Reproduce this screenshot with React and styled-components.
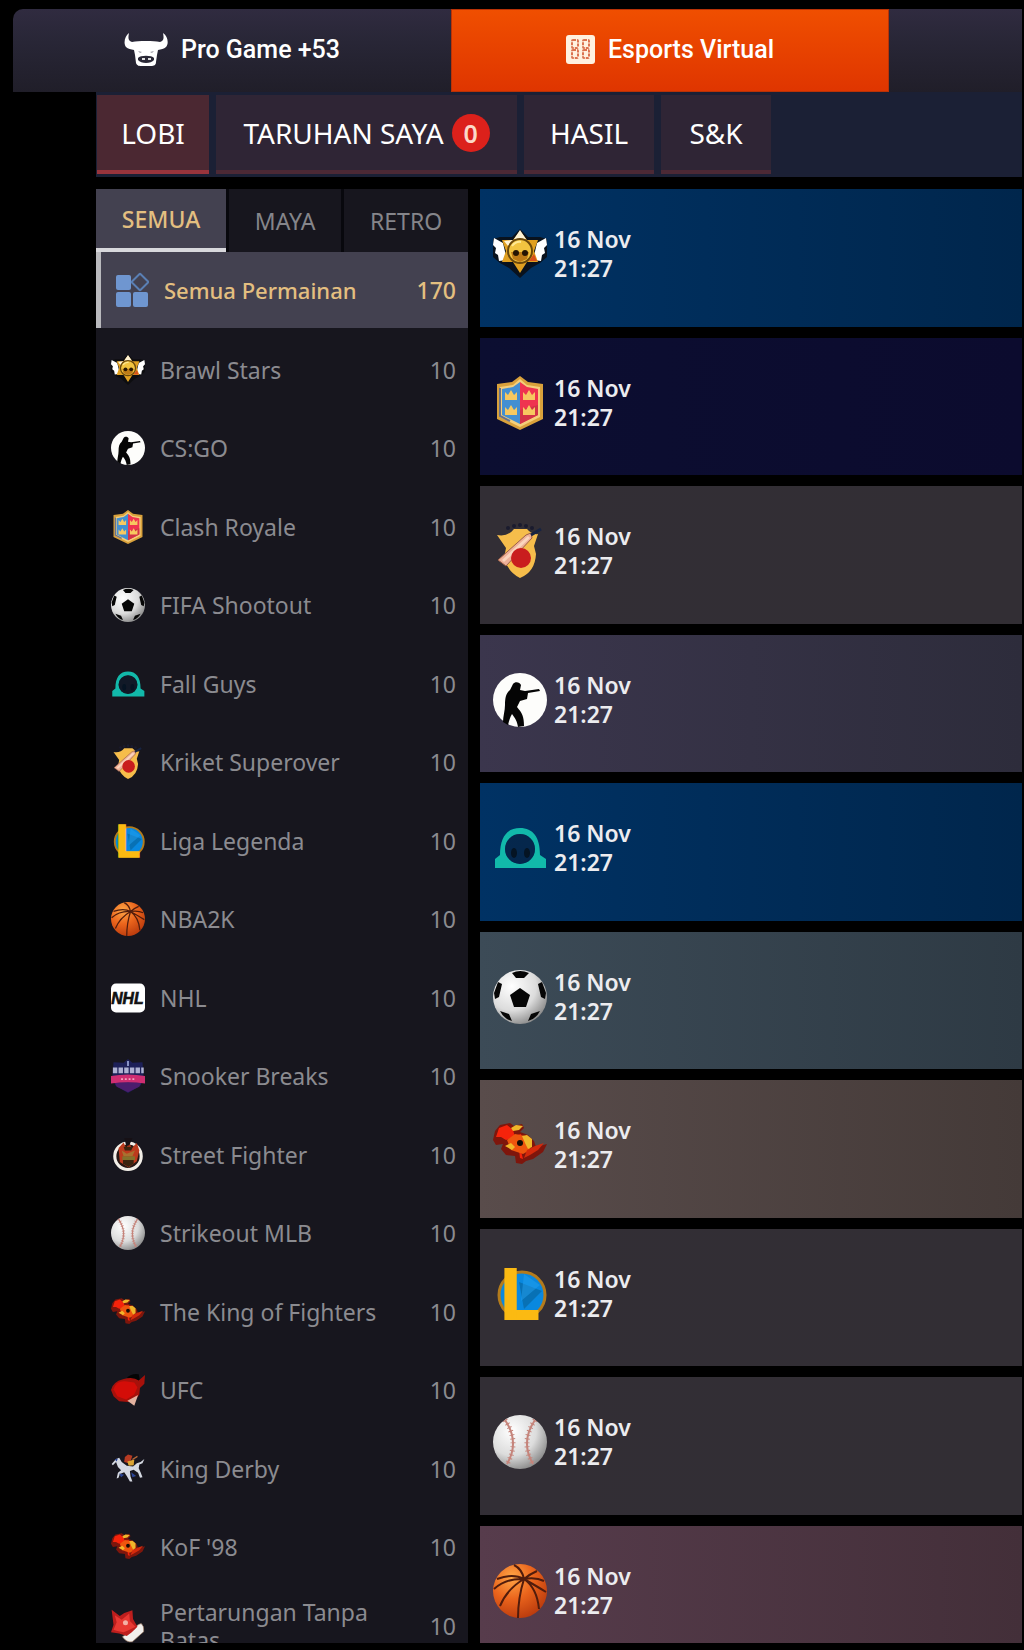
import React, { useState } from "react";
import styled, { createGlobalStyle, css } from "styled-components";

const GlobalStyle = createGlobalStyle`
  * { box-sizing: border-box; }
  html, body { margin: 0; background: #000; }
  body { font-family: "Noto Sans", "Open Sans", sans-serif; color: #fff; }
  button { font: inherit; color: inherit; border: 0; background: none; padding: 0; margin: 0; cursor: pointer; }
  ul { list-style: none; margin: 0; padding: 0; }
`;

const Page = styled.div`
  display: flex;
  flex-direction: column;
  height: 100vh;
  padding: 9px 2px 7px 13px;
  overflow: hidden;
`;

const TopBar = styled.nav`
  display: flex;
  flex: none;
  height: 83px;
  overflow: hidden;
  border-radius: 10px 0 0 0;
  background: linear-gradient(#302b40, #282636 40%, #201e29);
`;

const TopTab = styled.button`
  flex: 0 0 438px;
  display: flex;
  align-items: center;
  justify-content: center;
  gap: 13px;
  padding-bottom: 2px;
  font: 500 25px/32px Roboto, sans-serif;
  ${(p) =>
    p.$active &&
    css`
      background: linear-gradient(#f04f00, #df3500);
      box-shadow: inset 0 0 0 1px #b93206;
    `}
`;

const Body = styled.div`
  display: flex;
  flex-direction: column;
  flex: 1;
  min-height: 0;
  margin-left: 83px;
`;

const SubNav = styled.nav`
  display: grid;
  grid-template-columns: 112px 301px 130px 110px;
  flex: none;
  gap: 7px;
  height: 85px;
  padding: 3px 0 3px 1px;
  background: #1b2035;
`;

const SubTab = styled.button`
  display: flex;
  align-items: center;
  justify-content: center;
  gap: 8px;
  font-size: 28px;
  line-height: 38px;
  background: ${(p) => (p.$active ? "#4b2832" : "#2f2535")};
  border-bottom: 4px solid ${(p) => (p.$active ? "#98343c" : "#4c2935")};
`;

const Badge = styled.span`
  display: grid;
  place-items: center;
  width: 38px;
  height: 38px;
  border-radius: 50%;
  background: #dc211b;
  color: #fbd9c8;
  font-size: 25px;
  font-weight: 600;
`;

const Main = styled.div`
  display: grid;
  grid-template-columns: 372px minmax(0, 1fr);
  gap: 12px;
  flex: 1;
  min-height: 0;
  padding-top: 12px;
`;

const Sidebar = styled.aside`
  display: flex;
  flex-direction: column;
  min-height: 0;
  overflow: hidden;
  background: #17161e;
`;

const FilterTabs = styled.div`
  display: flex;
  flex: none;
  gap: 3px;
  height: 63px;
  background: #08080d;
`;

const FilterTab = styled.button`
  flex: 1 0 auto;
  padding: 0 20px;
  font-size: 23px;
  line-height: 32px;
  color: #85858a;
  background: #17161e;
  ${(p) =>
    p.$active &&
    css`
      color: #e3bf80;
      font-weight: 500;
      background: #434150;
      border-bottom: 4px solid #d8d8dc;
    `}
`;

const AllGames = styled.button`
  display: flex;
  flex: none;
  align-items: center;
  height: 76px;
  margin-bottom: 2px;
  padding: 0 12px 0 14px;
  border-left: 5px solid #b9b9bd;
  background: #434150;
  color: #e3bf80;
  font-size: 22px;
  font-weight: 500;
  line-height: 28px;
  text-align: left;
`;

const GameList = styled.ul`
  flex: none;
`;

const GameItem = styled.li`
  height: 79px;
  &:nth-child(even) { height: 78px; }
`;

const GameButton = styled.button`
  display: flex;
  align-items: center;
  width: 100%;
  height: 100%;
  padding: 0 12px 0 15px;
  color: #8b8b90;
  font-size: 23px;
  line-height: 28px;
  text-align: left;
`;

const GameName = styled.span`
  flex: 1;
  padding: 0 30px 0 15px;
`;

const Count = styled.span`
  flex: none;
  font-size: 23px;
`;

const MatchList = styled.ul`
  display: flex;
  flex-direction: column;
  gap: 11px;
  min-height: 0;
  overflow: hidden;
`;

const MatchCard = styled.li`
  display: flex;
  flex: none;
  align-items: center;
  gap: 7px;
  height: 138px;
  padding: 0 13px 8px;
  background: linear-gradient(90deg, ${(p) => p.$from}, ${(p) => p.$to});
  &:nth-child(even) { height: 137px; }
`;

const MatchTime = styled.time`
  display: flex;
  flex-direction: column;
  font-size: 23px;
  font-weight: 600;
  line-height: 29px;
  color: #ececef;
`;

const Glyph = styled.svg`
  flex: none;
  display: block;
  overflow: visible;
  width: ${(p) => p.$size}px;
  height: ${(p) => p.$size}px;
`;

const BullIcon = () => (
  <svg width="44" height="34" viewBox="0 0 44 34" aria-hidden="true">
    <path fill="#fff" d="M5 0C1 3-1 10 2 14c2 2 5 2 8 3l1 5 1 8c1 3 4 3 5 3h10c3 0 5-1 5-4l1-7 1-5c3-1 6-1 8-3 3-3 2-11-3-14 1 5 1 8-3 9-4-1-8-1-14-1S12 8 8 9C4 8 4 5 5 0z" />
    <path fill="#9a98a2" d="M14 18l4 1-2 1zM30 18l-4 1 2 1z" />
    <path fill="#2a2836" d="M14 25c2-3 14-3 16 0v2c-3 4-13 4-16 0z" />
    <path stroke="#ddd" strokeWidth="2" d="M18 26h3M24 26h3" />
  </svg>
);

const VirtualIcon = () => (
  <svg width="29" height="29" viewBox="0 0 29 29" aria-hidden="true">
    <rect width="29" height="29" rx="3" fill="#fff1df" />
    <g fill="none" stroke="#dc7350" strokeWidth="2">
      <rect x="6" y="5" width="6" height="8" rx="1" strokeDasharray="3 1" />
      <rect x="17" y="5" width="6" height="8" rx="1" strokeDasharray="3 1" />
      <rect x="6" y="15" width="6" height="8" rx="1" strokeDasharray="3 1" />
      <rect x="17" y="15" width="6" height="8" rx="1" strokeDasharray="3 1" />
    </g>
  </svg>
);

const AllIcon = () => (
  <svg width="34" height="36" viewBox="0 0 34 36" aria-hidden="true">
    <g fill="#6f96d0">
      <rect x="1" y="3" width="15" height="15" rx="2" />
      <rect x="1" y="20" width="15" height="15" rx="2" />
      <rect x="18" y="20" width="15" height="15" rx="2" />
    </g>
    <rect x="19" y="4" width="12" height="12" rx="1" transform="rotate(45 25 10)" fill="none" stroke="#5a7fb4" strokeWidth="2" />
  </svg>
);

const drawings = {
  brawl: (
    <>
      <path fill="#0b0b0d" d="M27 2l8 8h12l7 2v18l-7 6-9 5-11 10-11-10-9-5-7-6V12l7-2h12z" opacity=".8" />
      <path fill="#fff" d="M1 11l9 5 4 17-8 1-1-6-3-2 1-5-3-3zM53 11l-9 5-4 17 8 1 1-6 3-2-1-5 3-3z" />
      <path fill="#e0a021" d="M27 4l7 9h11l-4 11 4 11H34l-7 11-7-11H9l4-11-4-11h11z" />
      <path fill="#fff3d4" d="M27 3l6 9-6 2-6-2zM20 13l-9 1 4 5z" />
      <circle cx="27" cy="24" r="12" fill="#f2c440" stroke="#6a480c" strokeWidth="2" />
      <path fill="#bd7b17" d="M18 25h18l-2 7-7 3-7-3z" />
      <circle cx="23" cy="26" r="3" fill="#251503" />
      <circle cx="32" cy="26" r="3" fill="#251503" />
      <path stroke="#ffe993" strokeWidth="2" d="M19 19q4-5 9-4" fill="none" />
      <path fill="#d8501d" d="M36 34h8l-3-7z" />
    </>
  ),
  csgo: (
    <>
      <circle cx="27" cy="27" r="27" fill="#fdfdfb" />
      <path fill="#050505" d="M20 11c2-3 7-2 8 1l-1 5 5 1 14-2 1 2-12 2-1 6-7 2-3 6c5 6 7 9 7 19l-6 1c-1-6-3-9-6-13-2 3-3 7-4 11l-5-3c0-6 2-11 2-17 0-7 1-12 5-15z" />
    </>
  ),
  clash: (
    <>
      <path fill="#d9a13b" d="M27 0l8 6 15 2v35L27 54 4 43V8l15-2z" />
      <path fill="#f5cf7a" d="M27 3l7 6 13 2v30L27 51 7 41V11l13-2z" />
      <path fill="#438fd2" d="M27 6l-7 5-11 2v26l18 9z" />
      <path fill="#ef3450" d="M27 6l7 5 11 2v26l-18 9z" />
      <path fill="#d33347" d="M27 34l18-5v10l-18 9z" />
      <g fill="#f7c860">
        <path d="M12 16l3 3 3-5 3 5 3-3v8H12zM12 31l3 3 3-5 3 5 3-3v8H12zM30 16l3 3 3-5 3 5 3-3v8H30zM30 31l3 3 3-5 3 5 3-3v8H30z" />
      </g>
      <path stroke="#67718d" strokeWidth="2" d="M7 12v28l10 5" fill="none" />
    </>
  ),
  soccer: (
    <>
      <circle cx="27" cy="27" r="27" fill="url(#ballShade)" />
      <g fill="#060606">
        <path d="M27 18l10 7-4 12H21l-4-12z" />
        <path d="M19 3q8-4 17 0l-5 5h-8zM1 23l4-11 4 2-3 13-4 2zM53 23l-4-11-4 2 3 13 4 2zM7 41l9 3 3 7q-8-2-12-10zM47 41l-9 3-3 7q8-2 12-10z" />
      </g>
    </>
  ),
  fall: (
    <>
      <path fill="#12b9aa" fillRule="evenodd" d="M2 47v-9l5-4C7 16 14 7 27 7s20 9 20 27l6 4v9zM27 13a15 15 0 1 0 0 30a15 15 0 1 0 0-30z" />
      <circle cx="27" cy="28" r="15" fill="#0b1c33" fillOpacity=".45" />
      <ellipse cx="21" cy="32" rx="3" ry="5" fill="#051423" />
      <ellipse cx="34" cy="32" rx="3" ry="5" fill="#051423" />
    </>
  ),
  cricket: (
    <>
      <g fill="#1a1b2e">
        <circle cx="15" cy="4" r="2" />
        <circle cx="21" cy="2" r="2" />
        <circle cx="27" cy="1" r="2" />
        <circle cx="33" cy="2" r="2" />
        <circle cx="39" cy="4" r="2" />
      </g>
      <path fill="#f6bd4b" d="M4 11q11 2 17-6h13q5 6 11 5l-4 12 2 8q-1 18-16 24-12-6-16-20l2-10z" />
      <path fill="#eeb199" stroke="#9d6047" d="M5 36L33 11l5-2 1 5L13 42z" />
      <path stroke="#fad5be" strokeWidth="3" d="M10 37l26-24" />
      <path stroke="#172342" strokeWidth="3" d="M38 11l10-6" />
      <circle cx="28" cy="34" r="10" fill="#c91d1e" />
    </>
  ),
  liga: (
    <>
      <circle cx="29" cy="28" r="23" fill="#0988df" stroke="#b37b1c" strokeWidth="3" />
      <path fill="#0871b5" d="M26 15l23 9-18 18z" />
      <path fill="#23a0ee" d="M31 7l16 11-19 16z" opacity=".5" />
      <text x="8" y="52" fill="#fbba12" stroke="#fbba12" strokeWidth="2" fontFamily="Roboto, sans-serif" fontWeight="700" fontSize="70">L</text>
    </>
  ),
  basket: (
    <>
      <circle cx="27" cy="27" r="27" fill="url(#orangeShade)" />
      <g fill="none" stroke="#511c0c" strokeWidth="2">
        <path d="M4 15Q20 9 31 15q14 8 22 13M7 42Q14 25 31 15q6-5 13-8M25 54q0-20 6-39Q29 5 21 1M31 15q13 9 15 30M31 15q12-2 20 2M31 15Q13 14 1 25" />
      </g>
    </>
  ),
  nhl: (
    <>
      <rect y="4" width="54" height="46" rx="8" fill="#fff" />
      <text x="26" y="36" textAnchor="middle" fill="#111" stroke="#111" fontFamily="Liberation Sans, sans-serif" fontSize="25" fontWeight="700" fontStyle="italic">NHL</text>
    </>
  ),
  snooker: (
    <>
      <path fill="#1d2058" d="M27 0l7 6 16-1 2 25-5 12-20 12L7 42 2 30 4 5l16 1z" />
      <path fill="#4b1d6d" d="M6 37h42l-3 7-18 9-18-9z" />
      <path stroke="#aeb2d3" strokeWidth="9" strokeDasharray="7 2" d="M3 18h49" />
      <path stroke="#8f9acc" strokeWidth="3" d="M27 3v8" />
      <path fill="#cf2e72" d="M0 27q27-5 54 0v12q-27-4-54 0z" />
      <path stroke="#f2a5bf" strokeWidth="3" strokeDasharray="3 3" d="M16 32h23" />
    </>
  ),
  street: (
    <>
      <circle cx="27" cy="29" r="21" fill="#251714" stroke="#f2eee7" strokeWidth="5" />
      <path fill="#bd3a1d" d="M12 16l8-9 4 9 5-8 4 8 8-8 4 12-4 17-13 10-14-9z" />
      <path fill="#a9712f" d="M17 20l8 5 13-5-4 9H20z" />
      <path fill="#3a230e" d="M20 14h15l-3 6H22zM19 34h17v7l-8 5-9-5z" />
      <path fill="#84722c" d="M18 29h20v6H18z" />
      <path fill="#161015" d="M21 0h13l-5 12h-5z" />
    </>
  ),
  baseball: (
    <>
      <circle cx="27" cy="27" r="27" fill="url(#ballShade)" />
      <g fill="none" stroke="#c5847b">
        <path strokeWidth="2" d="M12 5q15 22 2 44M42 5Q27 27 40 49" />
        <path strokeWidth="5" strokeDasharray="1 3" d="M12 5q15 22 2 44M42 5Q27 27 40 49" />
      </g>
    </>
  ),
  kof: (
    <>
      <path fill="#7e160c" d="M0 22l2-9 5-6 10-2 4 3 8-2 2 4-4 4 8 3 6 6 2 6 11-3-4 8-10 7-7 2-4 3-6-1-1-7-9-1-5-6 2-5-7 1z" />
      <path fill="#f5230b" d="M3 19l3-9 8-3 6 5 2 7-9 3-5-3zM20 18l8-2 4 14-4 3 2 8-3-1-1-8-7-6z" />
      <path fill="#ee550e" d="M14 22l8-6 10 2 5 6v8l-7 4-12-4z" />
      <path fill="#d42a0c" d="M34 32l8-4 9-3-6 7-8 5-6 3z" />
      <path fill="#f0b62a" d="M18 10l5-3 7 1-4 4-6 1zM29 18l5-1 5 4v8l-4 2-3-6zM12 28l6-3 4 4-3 3z" />
      <circle cx="27" cy="25" r="3" fill="#140b06" />
    </>
  ),
  ufc: (
    <>
      <path fill="#050505" d="M25 8q8-8 19-6l2 11-12 2z" />
      <path fill="#a6110b" d="M54 3L44 12Q35 5 19 10 3 14 0 27l4 10 9 8 23 2 9-13 1-10 7-7z" />
      <path fill="#d40d08" d="M4 26q4-14 18-13l15 2 5 8-5 11-13 8-14-5z" />
      <path fill="#e3b2a0" d="M26 44l17-9-6 17z" />
    </>
  ),
  derby: (
    <>
      <path fill="#d5d9e2" d="M1 19l7-8 5-2 4 7 8 6 10 1 6-5 6-2 6-5-3 7-5 2-1 6 3 6 3 8-4 1-3-8-7-5-6 2 1 9 3 8h-4l-5-9-4-6-7 3-2 6-3 1 2-9 5-4-5-5-3-8-5 5z" />
      <path fill="#2b4596" d="M13 34l8 2-5 4zM32 32l8 6-6 2zM6 12l5-2-2 5z" />
      <path fill="#b63a22" d="M22 8l5-4 7 2-2 6-4 6-7-2z" />
      <path fill="#dba534" d="M26 15l11-3-1 9-8 1z" />
      <path stroke="#b96a3a" strokeWidth="2" d="M34 12l8-5" />
    </>
  ),
  free: (
    <>
      <path fill="#f1efec" stroke="#8b6750" d="M18 44l19-12q4-8 11-9 5 4 4 13-7 6-18 16-9 2-16-8z" />
      <path fill="#bd1e1d" d="M1 1l13 10q8-6 20-9l1 14 7 12-9 9-8 6-12-4-13-2 4-12z" />
      <path fill="#e83933" d="M6 10l11 7 12-10 1 12 9 9-12 6-7 3-10-2-6-2 5-12z" />
      <circle cx="23" cy="22" r="4" fill="#f3b0a6" />
    </>
  ),
};

const ShadeDefs = () => (
  <defs>
    <radialGradient id="ballShade" cx="35%" cy="30%" r="75%">
      <stop offset="0" stopColor="#fff" />
      <stop offset=".6" stopColor="#dcdcdc" />
      <stop offset="1" stopColor="#8a8a8a" />
    </radialGradient>
    <radialGradient id="orangeShade" cx="35%" cy="25%" r="80%">
      <stop offset="0" stopColor="#ffa646" />
      <stop offset=".5" stopColor="#ea641c" />
      <stop offset="1" stopColor="#b93a0d" />
    </radialGradient>
  </defs>
);

const GameIcon = ({ name, size }) => (
  <Glyph $size={size} viewBox="0 0 54 54" aria-hidden="true">
    <ShadeDefs />
    {drawings[name]}
  </Glyph>
);

const games = [
  ["brawl", "Brawl Stars"],
  ["csgo", "CS:GO"],
  ["clash", "Clash Royale"],
  ["soccer", "FIFA Shootout"],
  ["fall", "Fall Guys"],
  ["cricket", "Kriket Superover"],
  ["liga", "Liga Legenda"],
  ["basket", "NBA2K"],
  ["nhl", "NHL"],
  ["snooker", "Snooker Breaks"],
  ["street", "Street Fighter"],
  ["baseball", "Strikeout MLB"],
  ["kof", "The King of Fighters"],
  ["ufc", "UFC"],
  ["derby", "King Derby"],
  ["kof", "KoF '98"],
  ["free", "Pertarungan Tanpa Batas"],
];

const matches = [
  ["brawl", "#003264", "#00264c"],
  ["clash", "#0c0e31", "#0c0b2e"],
  ["cricket", "#322e35", "#322e34"],
  ["csgo", "#3b364d", "#2d2c3b"],
  ["fall", "#003264", "#00264c"],
  ["soccer", "#3c4b57", "#2e3a44"],
  ["kof", "#594c4b", "#443a38"],
  ["liga", "#322e35", "#322e34"],
  ["baseball", "#322e35", "#322e34"],
  ["basket", "#573c4c", "#432f39"],
];

const sections = ["LOBI", "TARUHAN SAYA", "HASIL", "S&K"];
const filters = ["SEMUA", "MAYA", "RETRO"];

export default function App() {
  const [section, setSection] = useState("LOBI");
  const [filter, setFilter] = useState("SEMUA");
  return (
    <>
      <GlobalStyle />
      <Page>
        <TopBar>
          <TopTab>
            <BullIcon />
            Pro Game +53
          </TopTab>
          <TopTab $active>
            <VirtualIcon />
            Esports Virtual
          </TopTab>
        </TopBar>
        <Body>
          <SubNav>
            {sections.map((s) => (
              <SubTab key={s} $active={s === section} onClick={() => setSection(s)}>
                {s}
                {s === "TARUHAN SAYA" && <Badge>0</Badge>}
              </SubTab>
            ))}
          </SubNav>
          <Main>
            <Sidebar>
              <FilterTabs>
                {filters.map((f) => (
                  <FilterTab key={f} $active={f === filter} onClick={() => setFilter(f)}>
                    {f}
                  </FilterTab>
                ))}
              </FilterTabs>
              <AllGames>
                <AllIcon />
                <GameName>Semua Permainan</GameName>
                <Count>170</Count>
              </AllGames>
              <GameList>
                {games.map(([icon, name]) => (
                  <GameItem key={name}>
                    <GameButton>
                      <GameIcon name={icon} size={34} />
                      <GameName>{name}</GameName>
                      <Count>10</Count>
                    </GameButton>
                  </GameItem>
                ))}
              </GameList>
            </Sidebar>
            <MatchList>
              {matches.map(([icon, from, to]) => (
                <MatchCard key={icon} $from={from} $to={to}>
                  <GameIcon name={icon} size={54} />
                  <MatchTime>
                    <span>16 Nov</span>
                    <span>21:27</span>
                  </MatchTime>
                </MatchCard>
              ))}
            </MatchList>
          </Main>
        </Body>
      </Page>
    </>
  );
}
